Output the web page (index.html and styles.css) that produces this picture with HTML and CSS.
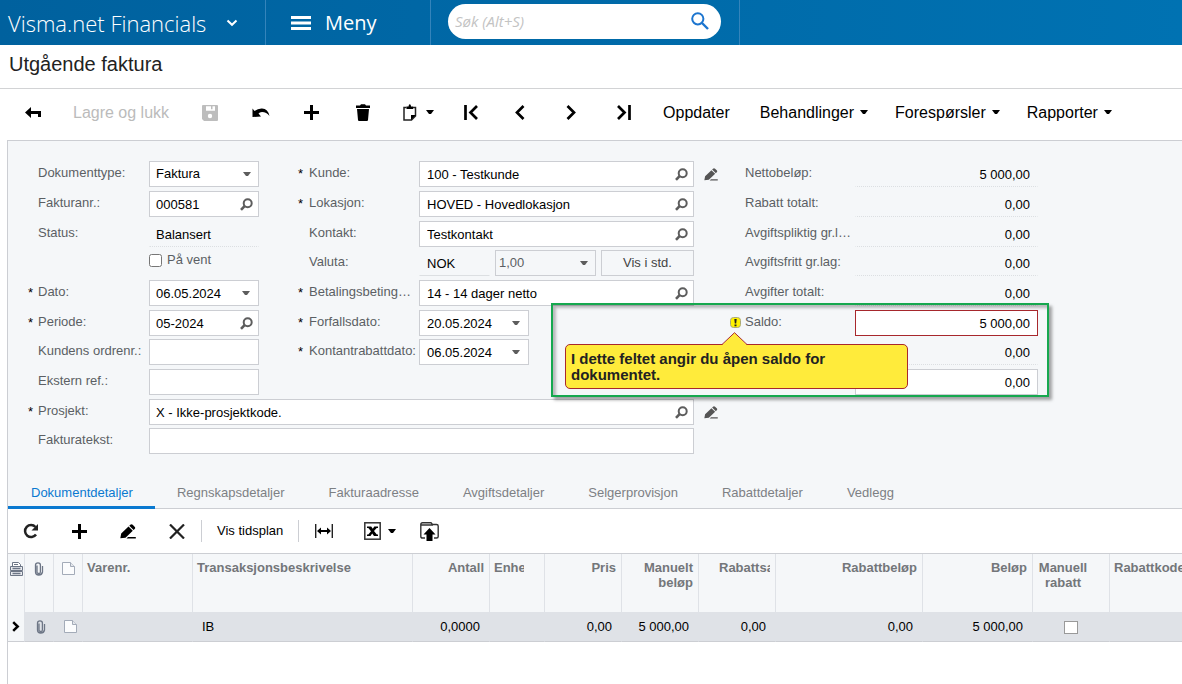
FILE: index.html
```html
<!DOCTYPE html>
<html lang="nb">
<head>
<meta charset="utf-8">
<meta name="viewport" content="width=device-width, initial-scale=1">
<title>Utgående faktura</title>
<link rel="stylesheet" href="styles.css">
</head>
<body>
<svg class="sprite" aria-hidden="true">
  <symbol id="caret" viewBox="0 0 8 5"><path d="M0 0h8L5 4H3z"/></symbol>
  <symbol id="lens" viewBox="0 0 13 13"><circle cx="7.7" cy="5.2" r="4" fill="none" stroke="currentColor" stroke-width="2"/><path d="M4.8 7.8 1 11.8" stroke="currentColor" stroke-width="2.6"/></symbol>
  <symbol id="pencil" viewBox="0 0 16 15"><path d="M.3 14.200l.9-4.700 7.300-7 4.300 4.200-7.300 7zM9.300 1.800l1-1q1.200-1.200 2.400 0l1.900 1.900q1.200 1.200 0 2.300l-1 1zM8 13h7.800v1.500H6.500z"/></symbol>
  <symbol id="plus" viewBox="0 0 15 15"><path d="M6 0h3v6h6v3H9v6H6V9H0V6h6z"/></symbol>
  <symbol id="clip" viewBox="0 0 10 14"><path d="M3 3.500v6.500q0 1.500 1.700 1.500T6.400 10V3Q6.400 .8 4 .8T1.500 3v7q0 3 3.200 3T8.500 10V4" fill="none" stroke="#6d7686" stroke-width="1.300"/></symbol>
  <symbol id="page" viewBox="0 0 13 13"><path d="M.5.5h8l4 4v8H.5z" fill="#fbfcfd" stroke="#a3abb8"/><path d="M8.500.5v4h4" fill="#e4e7ec" stroke="#a3abb8"/></symbol>
</svg>

<header class="topbar">
  <button class="brand" type="button">Visma.net Financials
    <svg width="12" height="8" viewBox="0 0 12 8"><path d="M1.500 1.500 6 5.800l4.500-4.300" fill="none" stroke="#fff" stroke-width="2"/></svg>
  </button>
  <button class="menu" type="button">
    <svg width="20" height="14" viewBox="0 0 20 14"><path d="M0 0h20v3H0zM0 5.500h20v3H0zM0 11h20v3H0z" fill="#fff"/></svg>Meny
  </button>
  <form class="search">
    <label class="search-box">
      <input type="search" placeholder="Søk (Alt+S)" aria-label="Søk">
      <svg width="18" height="18" viewBox="0 0 18 18"><circle cx="6.800" cy="6.800" r="5.600" fill="none" stroke="#1c75cf" stroke-width="2"/><path d="m11 11 6 6" stroke="#1c75cf" stroke-width="2.400"/></svg>
    </label>
  </form>
</header>

<h1 class="title">Utgående faktura</h1>

<nav class="toolbar" aria-label="Dokument">
  <button class="tool" type="button" aria-label="Tilbake"><svg width="16" height="12" viewBox="0 0 16 12"><path d="M0 5.500 6 0v4h10v6h-3V7H6v4z"/></svg></button>
  <button class="text" type="button" disabled>Lagre og lukk</button>
  <button class="tool" type="button" aria-label="Lagre" disabled><svg width="16" height="16" viewBox="0 0 16 16"><path fill-rule="evenodd" d="M0 1q0-1 1-1h14q1 0 1 1v14q0 1-1 1H2l-2-2zM4 1.200v4.600h9V1.200h-2.500v3H9v-3zM8 8.800a2.200 2.200 0 1 0 0 4.400 2.200 2.200 0 0 0 0-4.400z"/></svg></button>
  <button class="tool" type="button" aria-label="Angre"><svg width="18" height="10" viewBox="0 0 18 10"><path d="M.5.5l2 2.500Q6 .3 10 .5q6 .4 7.500 7.500-3-4-7.500-4-2.500 0-3.500 1.500L9 8.500.5 9z"/></svg></button>
  <button class="tool" type="button" aria-label="Ny"><svg width="15" height="15"><use href="#plus"/></svg></button>
  <button class="tool" type="button" aria-label="Slett"><svg width="14" height="17" viewBox="0 0 14 17"><path d="M0 1.500h4L5 .3h4l1 1.200h4V4H0zM1 5h12l-1 11q-.1 1-1 1H3q-.9 0-1-1z"/></svg></button>
  <button class="tool copy" type="button" aria-label="Utklippstavle"><svg width="14" height="17" viewBox="0 0 14 17"><path d="M3.500 3.500H1v12.500h7.500l4-4V3.500H10" fill="none" stroke="#222" stroke-width="1.500"/><path d="M3.500 2.500h2Q5.800.3 6.800.3t1.300 2.200h2V5h-6.600zM8 16v-5h5z"/></svg><svg width="8" height="5"><use href="#caret"/></svg></button>
  <span class="steps">
    <button type="button" aria-label="Første"><svg width="14" height="15" viewBox="0 0 14 15"><path d="M1.500 0v15M13 1 6.500 7.500 13 14" fill="none" stroke="#000" stroke-width="2.700"/></svg></button>
    <button type="button" aria-label="Forrige"><svg width="14" height="15" viewBox="0 0 14 15"><path d="M8.500 1 2 7.500 8.500 14" fill="none" stroke="#000" stroke-width="2.700"/></svg></button>
    <button type="button" aria-label="Neste"><svg width="14" height="15" viewBox="0 0 14 15"><path d="M1.500 1 8 7.500 1.500 14" fill="none" stroke="#000" stroke-width="2.700"/></svg></button>
    <button type="button" aria-label="Siste"><svg width="14" height="15" viewBox="0 0 14 15"><path d="M12.500 0v15M1 1l6.500 6.500L1 14" fill="none" stroke="#000" stroke-width="2.700"/></svg></button>
  </span>
  <button class="text" type="button">Oppdater</button>
  <span class="menus">
    <button class="text" type="button">Behandlinger<svg width="8" height="5"><use href="#caret"/></svg></button>
    <button class="text" type="button">Forespørsler<svg width="8" height="5"><use href="#caret"/></svg></button>
    <button class="text" type="button">Rapporter<svg width="8" height="5"><use href="#caret"/></svg></button>
  </span>
</nav>

<main class="document">
  <form class="fields">
    <label class="c1 r1" for="type">Dokumenttype:</label>
    <span class="box i1 r1"><select id="type"><option>Faktura</option></select><svg class="arrow" width="8" height="5"><use href="#caret"/></svg></span>
    <label class="c1 r2" for="nr">Fakturanr.:</label>
    <span class="box i1 r2"><input id="nr" value="000581"><button type="button" aria-label="Finn faktura"><svg width="13" height="13"><use href="#lens"/></svg></button></span>
    <label class="c1 r3" for="status">Status:</label>
    <span class="box plain i1 r3"><input id="status" value="Balansert" readonly></span>
    <label class="check i1 r4"><input type="checkbox">På vent</label>
    <label class="c1 r5 required" for="date">Dato:</label>
    <span class="box i1 r5"><input id="date" value="06.05.2024"><button type="button" aria-label="Velg dato"><svg width="8" height="5"><use href="#caret"/></svg></button></span>
    <label class="c1 r6 required" for="period">Periode:</label>
    <span class="box i1 r6"><input id="period" value="05-2024"><button type="button" aria-label="Finn periode"><svg width="13" height="13"><use href="#lens"/></svg></button></span>
    <label class="c1 r7" for="order">Kundens ordrenr.:</label>
    <span class="box i1 r7"><input id="order"></span>
    <label class="c1 r8" for="ext">Ekstern ref.:</label>
    <span class="box i1 r8"><input id="ext"></span>
    <label class="c1 r9 required" for="project">Prosjekt:</label>
    <span class="box wide r9"><input id="project" value="X - Ikke-prosjektkode."><button type="button" aria-label="Finn prosjekt"><svg width="13" height="13"><use href="#lens"/></svg></button></span>
    <button class="edit r9" type="button" aria-label="Rediger prosjekt"><svg width="14" height="13"><use href="#pencil"/></svg></button>
    <label class="c1 r10" for="text">Fakturatekst:</label>
    <span class="box wide r10"><input id="text"></span>

    <label class="c2 r1 required" for="customer">Kunde:</label>
    <span class="box i2 r1"><input id="customer" value="100 - Testkunde"><button type="button" aria-label="Finn kunde"><svg width="13" height="13"><use href="#lens"/></svg></button></span>
    <button class="edit r1" type="button" aria-label="Rediger kunde"><svg width="14" height="13"><use href="#pencil"/></svg></button>
    <label class="c2 r2 required" for="location">Lokasjon:</label>
    <span class="box i2 r2"><input id="location" value="HOVED - Hovedlokasjon"><button type="button" aria-label="Finn lokasjon"><svg width="13" height="13"><use href="#lens"/></svg></button></span>
    <label class="c2 r3" for="contact">Kontakt:</label>
    <span class="box i2 r3"><input id="contact" value="Testkontakt"><button type="button" aria-label="Finn kontakt"><svg width="13" height="13"><use href="#lens"/></svg></button></span>
    <label class="c2 r4" for="currency">Valuta:</label>
    <span class="currency i2 r4">
      <span class="box plain solid"><input id="currency" value="NOK" readonly></span>
      <span class="box muted"><select aria-label="Kurs"><option>1,00</option></select><svg class="arrow" width="8" height="5"><use href="#caret"/></svg></span>
      <button class="base" type="button">Vis i std.</button>
    </span>
    <label class="c2 r5 required" for="terms">Betalingsbeting…</label>
    <span class="box i2 r5"><input id="terms" value="14 - 14 dager netto"><button type="button" aria-label="Finn betingelse"><svg width="13" height="13"><use href="#lens"/></svg></button></span>
    <label class="c2 r6 required" for="due">Forfallsdato:</label>
    <span class="box i2 short r6"><input id="due" value="20.05.2024"><button type="button" aria-label="Velg forfallsdato"><svg width="8" height="5"><use href="#caret"/></svg></button></span>
    <label class="c2 r7 required" for="cash">Kontantrabattdato:</label>
    <span class="box i2 short r7"><input id="cash" value="06.05.2024"><button type="button" aria-label="Velg rabattdato"><svg width="8" height="5"><use href="#caret"/></svg></button></span>

    <label class="c3 r1" for="net">Nettobeløp:</label>
    <span class="box plain sum r1"><input id="net" value="5 000,00" readonly></span>
    <label class="c3 r2" for="disc">Rabatt totalt:</label>
    <span class="box plain sum r2"><input id="disc" value="0,00" readonly></span>
    <label class="c3 r3" for="taxable">Avgiftspliktig gr.l…</label>
    <span class="box plain sum r3"><input id="taxable" value="0,00" readonly></span>
    <label class="c3 r4" for="exempt">Avgiftsfritt gr.lag:</label>
    <span class="box plain sum r4"><input id="exempt" value="0,00" readonly></span>
    <label class="c3 r5" for="tax">Avgifter totalt:</label>
    <span class="box plain sum r5"><input id="tax" value="0,00" readonly></span>
    <label class="c3 r6 warned" for="balance"><svg width="11" height="11" viewBox="0 0 11 11"><rect x=".5" y=".5" width="10" height="10" rx="3" fill="#fff200" stroke="#aaa878"/><path d="M4.300 2h2.400l-.5 4.500H4.800zM4.500 7.500h2v1.800h-2z" fill="#222"/></svg>Saldo:</label>
    <span class="box sum error r6"><input id="balance" value="5 000,00"></span>
    <span class="box plain sum r7"><input aria-label="Kontantrabatt" value="0,00" readonly></span>
    <span class="box sum r8"><input aria-label="Kontantrabattbeløp" value="0,00"></span>

    <div class="highlight"></div>
    <div class="tip" role="tooltip">
      <svg class="pointer" width="26" height="14" viewBox="0 0 26 14"><path d="M0 13 12.500.7 25 13v1H0z" fill="#ffeb3b"/><path d="M0 12.500 12.500.7 25 12.500" fill="none" stroke="#a8282d"/></svg>
      I dette feltet angir du åpen saldo for dokumentet.
    </div>
  </form>

  <div class="tabs" role="tablist">
    <button type="button" role="tab" aria-selected="true">Dokumentdetaljer</button>
    <button type="button" role="tab" aria-selected="false">Regnskapsdetaljer</button>
    <button type="button" role="tab" aria-selected="false">Fakturaadresse</button>
    <button type="button" role="tab" aria-selected="false">Avgiftsdetaljer</button>
    <button type="button" role="tab" aria-selected="false">Selgerprovisjon</button>
    <button type="button" role="tab" aria-selected="false">Rabattdetaljer</button>
    <button type="button" role="tab" aria-selected="false">Vedlegg</button>
  </div>

  <section class="details">
    <div class="linebar">
      <span class="actions">
        <button type="button" aria-label="Oppdater"><svg width="16" height="16" viewBox="0 0 16 16"><path d="M13 11.500A6 6 0 1 1 12.500 4" fill="none" stroke="#222" stroke-width="2.500"/><path d="M15 1v6.500H8.500z" fill="#222"/></svg></button>
        <button type="button" aria-label="Ny linje"><svg width="15" height="15"><use href="#plus"/></svg></button>
        <button type="button" aria-label="Rediger linje"><svg width="16" height="15"><use href="#pencil"/></svg></button>
        <button type="button" aria-label="Slett linje"><svg width="16" height="15" viewBox="0 0 16 15"><path d="m1 .5 14 14M15 .5l-14 14" stroke="#222" stroke-width="2.200"/></svg></button>
      </span>
      <button class="plan" type="button">Vis tidsplan</button>
      <span class="exports">
        <button type="button" aria-label="Tilpass kolonner"><svg width="18" height="14" viewBox="0 0 18 14"><path d="M.7 0v14M17.300 0v14" stroke="#222" stroke-width="1.400"/><path d="M2 7l4-3.500V6h6V3.500L16 7l-4 3.500V8H6v2.500z"/></svg></button>
        <button class="excel" type="button" aria-label="Eksporter"><svg width="17" height="18" viewBox="0 0 17 18"><rect x=".8" y=".8" width="15.400" height="16.400" fill="none" stroke="#333" stroke-width="1.500"/><path d="M3 4.500h4.200l1.600 2.300 1.500-2.300H14v1.500h-1.300L10 9l2.800 3.500H14V14h-4l-1.800-2.600L6.500 14H3v-1.500h1.300L7 9.200 4.300 6H3z"/></svg><svg width="8" height="5"><use href="#caret"/></svg></button>
        <button type="button" aria-label="Last opp"><svg width="19" height="19" viewBox="0 0 19 19"><path d="M5 16H2.500Q.8 16 .8 14.500V2.500q0-1.700 1.700-1.700H11l1.500 1.700h4q1.700 0 1.700 1.500v10.500q0 1.500-1.700 1.500H14M1 3h12" fill="none" stroke="#333" stroke-width="1.400"/><path d="m9.500 6 6 6.500h-3V19h-6v-6.500h-3z"/></svg></button>
      </span>
    </div>
    <div class="gridwrap">
      <table class="grid">
        <colgroup><col class="w16"><col class="w29"><col class="w29"><col class="w110"><col class="w220"><col class="w77"><col class="w55"><col class="w77"><col class="w77"><col class="w77"><col class="w147"><col class="w110"><col class="w77"><col class="w110"></colgroup>
        <thead>
          <tr>
            <th class="icon first"><svg width="13" height="15" viewBox="0 0 13 15"><path d="M2.500 5V.5h6l2 2V5z" fill="#fff" stroke="#6d7686"/><path d="M4 2.500h4" stroke="#6d7686"/><path d="M.5 4.500h12v4H.5zM.5 9.500h12v4H.5z" fill="#e9ebef" stroke="#6d7686"/><path d="M2.500 6.500h8M2.500 11.500h8" stroke="#6d7686" stroke-width="1.500"/></svg></th>
            <th class="icon"><svg width="10" height="14"><use href="#clip"/></svg></th>
            <th class="icon"><svg width="13" height="13"><use href="#page"/></svg></th>
            <th>Varenr.</th>
            <th>Transaksjonsbeskrivelse</th>
            <th class="num">Antall</th>
            <th><div class="clipped enh">Enhet</div></th>
            <th class="num">Pris</th>
            <th class="num">Manuelt beløp</th>
            <th><div class="clipped rab">Rabattsats</div></th>
            <th class="num">Rabattbeløp</th>
            <th class="num">Beløp</th>
            <th class="mid">Manuell rabatt</th>
            <th>Rabattkode</th>
          </tr>
        </thead>
        <tbody>
          <tr>
            <td class="icon first current"><svg width="8" height="11" viewBox="0 0 8 11"><path d="m1.200 1.200 4.500 4.300-4.500 4.300" fill="none" stroke="#000" stroke-width="2.500"/></svg></td>
            <td class="icon shift"><svg width="10" height="14"><use href="#clip"/></svg></td>
            <td class="icon shift"><svg width="13" height="13"><use href="#page"/></svg></td>
            <td></td>
            <td>IB</td>
            <td class="num">0,0000</td>
            <td></td>
            <td class="num">0,00</td>
            <td class="num">5 000,00</td>
            <td class="num">0,00</td>
            <td class="num">0,00</td>
            <td class="num">5 000,00</td>
            <td class="mid"><input type="checkbox" aria-label="Manuell rabatt"></td>
            <td></td>
          </tr>
        </tbody>
      </table>
    </div>
  </section>
</main>
</body>
</html>
```
FILE: styles.css
```css
* { box-sizing: border-box; }

body {
  margin: 0;
  min-height: 100vh;
  display: flex;
  flex-direction: column;
  overflow-x: hidden;
  background: #fff;
  color: #000;
  font: 13px/16px "Liberation Sans", Arial, sans-serif;
}

button, input, select { font: inherit; color: inherit; margin: 0; }
button { padding: 0; border: 0; background: none; display: flex; align-items: center; }
svg { display: block; flex: none; }
.sprite { position: absolute; width: 0; height: 0; }

/* Top bar */
.topbar {
  display: flex;
  height: 45px;
  flex: none;
  background: linear-gradient(90deg, #00619e, #0072b2);
  color: #fff;
  font: 300 22px/30px "Open Sans", sans-serif;
}
.brand { width: 266px; padding-left: 8px; gap: 20px; border-right: 1px solid #3484bb; white-space: nowrap; }
.menu { width: 165px; padding-left: 25px; gap: 14px; border-right: 1px solid #3484bb; font-size: 20px; font-weight: 400; }
.search { width: 309px; padding: 4px 18px 6px 17px; border-right: 1px solid #3484bb; }
.search-box { display: flex; align-items: center; height: 35px; padding: 0 12px 2px 7px; background: #fff; border-radius: 18px; }
.search-box input { flex: 1; min-width: 0; padding: 0; border: 0; outline: 0; background: none; font: 400 15px/20px "Open Sans", sans-serif; color: #333; }
.search-box input::placeholder { color: #c3c3c3; font-style: italic; opacity: 1; }

.title { margin: 0; padding: 6px 9px 10px; border-bottom: 1px solid #d2d3d5; font: 400 20px/27px "Liberation Sans", Arial, sans-serif; color: #222; }

/* Document toolbar */
.toolbar { display: flex; align-items: center; gap: 30px; height: 51px; padding: 0 22px 4px; flex: none; font-size: 16px; }
.tool { width: 21px; justify-content: center; height: 24px; }
.copy { width: 31px; gap: 9px; }
.steps { display: flex; gap: 37px; margin-right: 2px; }
.menus { display: flex; gap: 27px; }
.text { gap: 6px; white-space: nowrap; }
.toolbar button:disabled { color: #bbb; fill: #bdbdbd; }

/* Document */
.document { flex: 1; margin-left: 7px; display: flex; flex-direction: column; border-left: 1px solid #ccced3; border-top: 1px solid #ccced3; background: #f5f7f9; }
.fields {
  position: relative;
  display: grid;
  grid-template-columns: 121px 110px 39px 121px 275px 35px 126px 183px;
  grid-template-rows: repeat(3, 30px 30px 29px) 30px;
  align-items: start;
  padding: 20px 20px 18px;
  color: #5b5f64;
}
.r1 { grid-row: 1; } .r2 { grid-row: 2; } .r3 { grid-row: 3; } .r4 { grid-row: 4; } .r5 { grid-row: 5; }
.r6 { grid-row: 6; } .r7 { grid-row: 7; } .r8 { grid-row: 8; } .r9 { grid-row: 9; } .r10 { grid-row: 10; }
.c1 { grid-column: 1; } .i1 { grid-column: 2; }
.c2 { grid-column: 4; } .i2 { grid-column: 5; }
.c3 { grid-column: 7; } .sum { grid-column: 8; }
.wide { grid-column: 2 / 6; }
.edit { grid-column: 6; height: 26px; padding-left: 10px; fill: #555; }

.c1, .c2, .c3 { display: flex; align-items: center; height: 24px; padding-left: 10px; white-space: nowrap; }
.c2 { padding-left: 11px; }
.c3 { padding-left: 16px; padding-right: 3px; }
.required { padding-left: 0; }
.required::before { content: "*"; width: 10px; color: #000; line-height: 14px; padding-top: 2px; flex: none; }
.c2.required::before { width: 11px; }
.warned { padding-left: 1px; gap: 4px; }

.box { display: flex; align-items: center; height: 26px; border: 1px solid #ccced3; background: #fff; color: #000; position: relative; }
.box input, .box select { flex: 1; width: 100%; min-width: 0; height: 24px; padding: 0 0 0 7px; border: 0; outline: 0; background: none; appearance: none; }
.i1 input, .i1 select, .wide input { padding-left: 6px; }
.box button { width: 24px; height: 24px; justify-content: center; color: #5d5d5d; fill: #5d5d5d; }
.arrow { position: absolute; right: 7px; top: 10px; fill: #5d5d5d; pointer-events: none; }
.plain { background: none; border-color: transparent; border-bottom: 1px dotted #dcdfe2; }
.solid { border-bottom-style: solid; }
.muted { background: none; color: #5b5f64; }
.box.muted select { padding-left: 3px; }
.sum input { text-align: right; padding-right: 7px; }
.error { border-color: #a8282d; }
.short { width: 110px; }
.currency { display: grid; grid-template-columns: 71px 101px 93px; gap: 5px; }
.base { height: 26px; justify-content: center; border: 1px solid #ccced3; color: #444; }
.check { display: flex; align-items: center; gap: 5px; height: 20px; }
.check input { width: 13px; height: 13px; }

.highlight { position: absolute; left: 543px; top: 162px; width: 498px; height: 94px; border: 2px solid #16a84f; box-shadow: 3px 3px 3px rgba(0, 0, 0, .35), inset 3px 3px 3px rgba(0, 0, 0, .25); pointer-events: none; }
.tip { position: absolute; left: 557px; top: 203px; width: 343px; padding: 6px 60px 5px 5px; border: 1px solid #a8282d; border-radius: 5px; background: #ffeb3b; color: #222; font-weight: 700; font-size: 15px; line-height: 16px; }
.pointer { position: absolute; left: 156px; top: -13px; }

/* Tabs */
.tabs { display: flex; height: 33px; border-bottom: 1px solid #ccced3; color: #7d8084; }
.tabs button { padding: 3px 22px 0; white-space: nowrap; border-bottom: 3px solid transparent; margin-bottom: -1px; }
.tabs [aria-selected="true"] { padding-left: 23px; border-bottom-color: #0a79d0; color: #0a79d0; }

/* Line toolbar and table */
.details { flex: 1; background: #fff; }
.linebar { display: flex; align-items: center; height: 44px; }
.actions { display: flex; gap: 33px; padding: 0 16px 0 15px; }
.plan { height: 22px; padding: 0 15px; border: solid #ccced3; border-width: 0 1px; white-space: nowrap; }
.exports { display: flex; align-items: center; gap: 24px; padding-left: 16px; }
.excel { gap: 7px; margin-left: 7px; }

.gridwrap { overflow: hidden; }
.grid { table-layout: fixed; width: 1211px; border-collapse: separate; border-spacing: 0; border-top: 1px solid #ccced3; }
.w16 { width: 17px; } .w29 { width: 29px; } .w55 { width: 55px; } .w77 { width: 77px; }
.w110 { width: 110px; } .w147 { width: 147px; } .w220 { width: 220px; }
.grid th { height: 58px; padding: 6px 5px 0 4px; vertical-align: top; text-align: left; line-height: 15px; color: #73767a; background: #f5f7f9; border-right: 1px solid #dfe2e7; }
.grid td { height: 30px; padding: 0 9px; background: #dfe2e7; border-bottom: 1px solid #ccced3; border-right: 1px solid #dfe2e7; }
.grid .num { text-align: right; }
.grid .mid { text-align: center; }
.grid th.mid { padding-right: 20px; }
.grid .icon { padding-left: 0; padding-right: 0; }
.grid .icon svg { margin: 0 auto; }
.grid th.icon { padding-top: 8px; }
.grid .shift { padding-left: 4px; }
.grid .current { background: #f5f7f9; }
.clipped { overflow: hidden; white-space: nowrap; width: 30px; }
.rab { width: 51px; margin-left: 16px; }
.grid input { appearance: none; display: block; width: 14px; height: 13px; margin: 1px auto 0; border: 1px solid #999; background: #fff; }
```
